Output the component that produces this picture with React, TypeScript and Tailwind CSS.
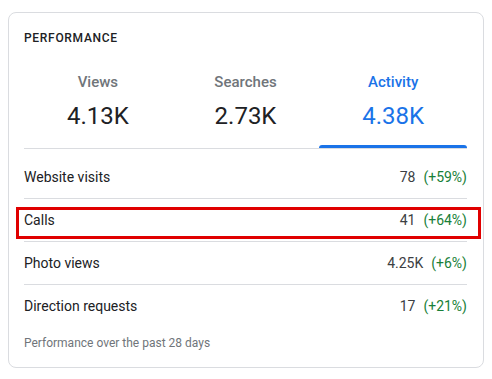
import React from "react";

const tabs = [
  { label: "Views", value: "4.13K", active: false },
  { label: "Searches", value: "2.73K", active: false },
  { label: "Activity", value: "4.38K", active: true },
];

const rows = [
  { label: "Website visits", value: "78", pct: "(+59%)", hl: false },
  { label: "Calls", value: "41", pct: "(+64%)", hl: true },
  { label: "Photo views", value: "4.25K", pct: "(+6%)", hl: false },
  { label: "Direction requests", value: "17", pct: "(+21%)", hl: false },
];

export default function App() {
  return (
    <div
      className="w-[492px] h-[379px] bg-white pt-[12px] pl-[8px]"
      style={{ fontFamily: "Roboto, 'Noto Sans', Arial, sans-serif" }}
    >
      <div className="w-[476px] h-[356px] rounded-[8px] border border-[#dadce0] bg-white pl-[15px] pr-[16px] pt-[17px]">
        <div className="h-[16px] text-[12px] leading-[16px] font-medium tracking-[0.7px] text-[#202124]">
          PERFORMANCE
        </div>
        <div className="mt-[26px] flex border-b border-[#dadce0]">
          {tabs.map((t) => (
            <div key={t.label} className="flex-1 flex flex-col items-center">
              <div
                className={`h-[20px] text-[15px] leading-[20px] font-medium ${
                  t.active ? "text-[#1a73e8]" : "text-[#70757a]"
                }`}
              >
                {t.label}
              </div>
              <div
                className={`mt-[8px] h-[32px] text-[24px] leading-[32px] ${
                  t.active ? "text-[#1a73e8]" : "text-[#202124]"
                }`}
              >
                {t.value}
              </div>
              <div
                className={`mt-[13px] h-[3px] w-full rounded-t-[3px] ${
                  t.active ? "bg-[#1a73e8]" : "bg-transparent"
                }`}
              />
            </div>
          ))}
        </div>
        <div className="mt-[7px]">
          {rows.map((r, i) => (
            <div
              key={r.label}
              className={`relative h-[43px] flex items-center justify-between text-[14px] ${
                i < rows.length - 1 ? "border-b border-[#dadce0]" : ""
              }`}
            >
              <span className="text-[#202124]">{r.label}</span>
              <span className="flex items-center gap-[8px]">
                <span className="text-[#3c4043]">{r.value}</span>
                <span className="text-[#188038]">{r.pct}</span>
              </span>
              {r.hl && (
                <div className="absolute left-[-8px] right-[-14px] top-[8px] h-[32px] border-[3px] border-[#e00000]" />
              )}
            </div>
          ))}
        </div>
        <div className="mt-[7px] h-[16px] text-[12px] leading-[16px] text-[#70757a]">
          Performance over the past 28 days
        </div>
      </div>
    </div>
  );
}
